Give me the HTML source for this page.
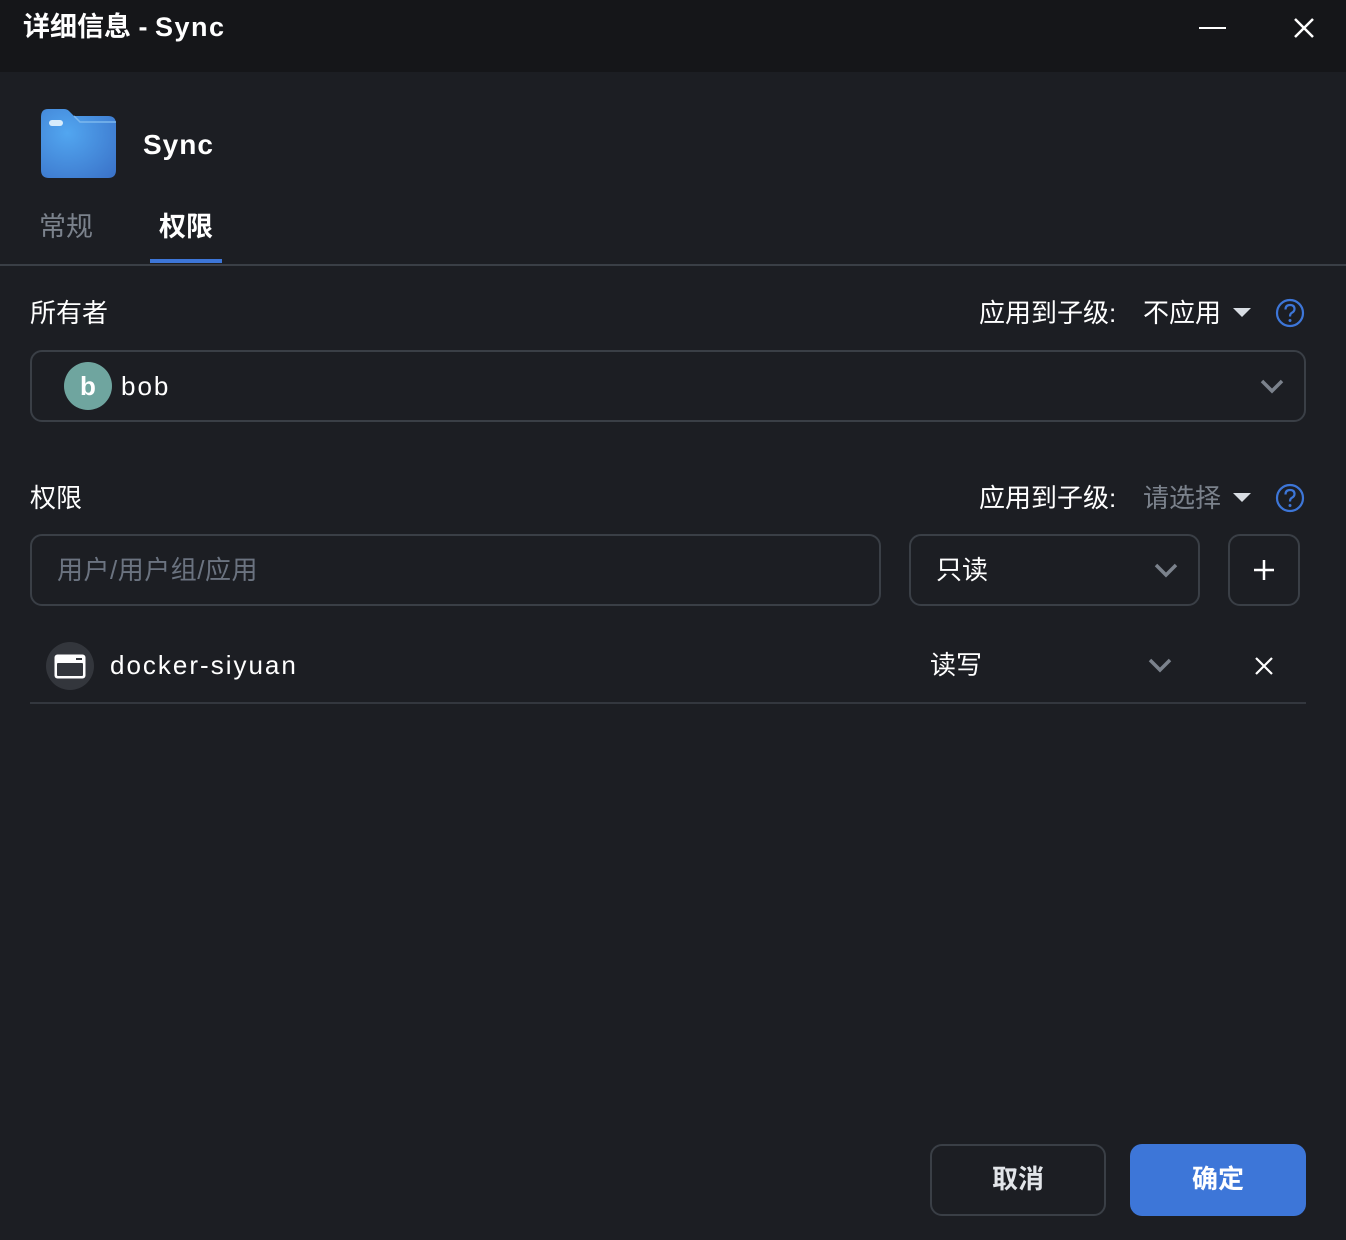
<!DOCTYPE html>
<html><head><meta charset="utf-8"><style>
*{margin:0;padding:0;box-sizing:border-box}
body{width:1346px;height:1240px;background:#1c1e23;font-family:"Liberation Sans","Noto Sans CJK SC",sans-serif;color:#fff;position:relative;overflow:hidden}
.a{position:absolute}
.t{font-size:26px;white-space:nowrap;line-height:1}
.box{position:absolute;border:2px solid #3a3f46;border-radius:12px}
</style></head><body>
<div class="a" style="left:0;top:0;width:1346px;height:72px;background:#151619"></div>
<div class="a t" style="left:23px;top:14px;font-size:27px;font-weight:bold">详细信息 - <span style="letter-spacing:1.5px">Sync</span></div>
<div class="a" style="left:1199px;top:27px;width:27px;height:2px;background:#fff"></div>
<svg class="a" style="left:1292px;top:16px" width="24" height="24"><path d="M3 3L21 21M21 3L3 21" stroke="#fff" stroke-width="2.5"/></svg>
<svg class="a" style="left:40px;top:108px" width="78" height="72">
<defs><radialGradient id="g" cx="0.35" cy="0.35" r="0.9"><stop offset="0" stop-color="#52a6f0"/><stop offset="1" stop-color="#3a72c8"/></radialGradient></defs>
<path d="M8 1H24Q27 1 29 3L34 8H68Q76 8 76 16V62Q76 70 68 70H9Q1 70 1 62V9Q1 1 8 1Z" fill="url(#g)"/>
<path d="M34 8L40 14H76" stroke="#7cb8ee" stroke-width="1.5" fill="none"/>
<rect x="9" y="12" width="14" height="6" rx="3" fill="#d8ecfb"/></svg>
<div class="a t" style="left:143px;top:131px;font-size:28px;font-weight:bold;letter-spacing:1px">Sync</div>
<div class="a t" style="left:39px;top:214px;font-size:27px;color:#7b828c">常规</div>
<div class="a t" style="left:159px;top:214px;font-size:27px;font-weight:bold">权限</div>
<div class="a" style="left:150px;top:259px;width:72px;height:4px;background:#3d76d8"></div>
<div class="a" style="left:0;top:264px;width:1346px;height:2px;background:#3a3f46"></div>

<div class="a t" style="left:30px;top:300px">所有者</div>
<div class="a t" style="left:979px;top:300px">应用到子级:</div>
<div class="a t" style="left:1143px;top:300px">不应用</div>
<svg class="a" style="left:1232px;top:307px" width="20" height="12"><path d="M1 1H19L10 10Z" fill="#d8dde3"/></svg>
<svg class="a" style="left:1275px;top:298px" width="30" height="30"><circle cx="15" cy="15" r="13" stroke="#3d76d8" stroke-width="2.2" fill="none"/><path d="M10.5 11.5Q10.5 7 15 7Q19.5 7 19.5 11Q19.5 13.5 16.5 15Q15 16 15 18.5" stroke="#3d76d8" stroke-width="2.2" fill="none"/><circle cx="15" cy="22.5" r="1.5" fill="#3d76d8"/></svg>
<div class="box" style="left:30px;top:350px;width:1276px;height:72px"></div>
<div class="a" style="left:64px;top:362px;width:48px;height:48px;border-radius:50%;background:#6fa59f;text-align:center;line-height:48px;font-size:26px;font-weight:bold">b</div>
<div class="a t" style="left:121px;top:373px;letter-spacing:2px">bob</div>
<svg class="a" style="left:1259px;top:377px" width="26" height="18"><path d="M3 4L13 14L23 4" stroke="#7b828c" stroke-width="3.5" fill="none"/></svg>

<div class="a t" style="left:30px;top:485px">权限</div>
<div class="a t" style="left:979px;top:485px">应用到子级:</div>
<div class="a t" style="left:1143px;top:485px;color:#7b828c">请选择</div>
<svg class="a" style="left:1232px;top:492px" width="20" height="12"><path d="M1 1H19L10 10Z" fill="#d8dde3"/></svg>
<svg class="a" style="left:1275px;top:483px" width="30" height="30"><circle cx="15" cy="15" r="13" stroke="#3d76d8" stroke-width="2.2" fill="none"/><path d="M10.5 11.5Q10.5 7 15 7Q19.5 7 19.5 11Q19.5 13.5 16.5 15Q15 16 15 18.5" stroke="#3d76d8" stroke-width="2.2" fill="none"/><circle cx="15" cy="22.5" r="1.5" fill="#3d76d8"/></svg>
<div class="box" style="left:30px;top:534px;width:851px;height:72px"></div>
<div class="a t" style="left:57px;top:557px;color:#6b7380;letter-spacing:0.5px">用户/用户组/应用</div>
<div class="box" style="left:909px;top:534px;width:291px;height:72px"></div>
<div class="a t" style="left:936px;top:557px">只读</div>
<svg class="a" style="left:1153px;top:561px" width="26" height="18"><path d="M3 4L13 14L23 4" stroke="#7b828c" stroke-width="3.5" fill="none"/></svg>
<div class="box" style="left:1228px;top:534px;width:72px;height:72px"></div>
<svg class="a" style="left:1252px;top:558px" width="24" height="24"><path d="M12 2V22M2 12H22" stroke="#fff" stroke-width="2.5"/></svg>

<div class="a" style="left:46px;top:642px;width:48px;height:48px;border-radius:50%;background:#33363c"></div>
<svg class="a" style="left:53px;top:653px" width="34" height="27"><rect x="1.5" y="1.5" width="31" height="24" rx="3" fill="#fff"/><rect x="4" y="10" width="26" height="13" rx="1" fill="#33363c"/><rect x="23" y="5" width="6" height="2" fill="#33363c"/></svg>
<div class="a t" style="left:110px;top:652px;letter-spacing:2px">docker-siyuan</div>
<div class="a t" style="left:930px;top:652px">读写</div>
<svg class="a" style="left:1147px;top:656px" width="26" height="18"><path d="M3 4L13 14L23 4" stroke="#7b828c" stroke-width="3.5" fill="none"/></svg>
<svg class="a" style="left:1254px;top:656px" width="20" height="20"><path d="M2 2L18 18M18 2L2 18" stroke="#fff" stroke-width="2.2"/></svg>
<div class="a" style="left:30px;top:702px;width:1276px;height:2px;background:#33373e"></div>

<div class="box" style="left:930px;top:1144px;width:176px;height:72px"></div>
<div class="a t" style="left:930px;top:1166px;width:176px;text-align:center;font-weight:bold;color:#e2e5e9">取消</div>
<div class="a" style="left:1130px;top:1144px;width:176px;height:72px;border-radius:12px;background:#3d76d8"></div>
<div class="a t" style="left:1130px;top:1166px;width:176px;text-align:center;font-weight:bold">确定</div>
</body></html>
